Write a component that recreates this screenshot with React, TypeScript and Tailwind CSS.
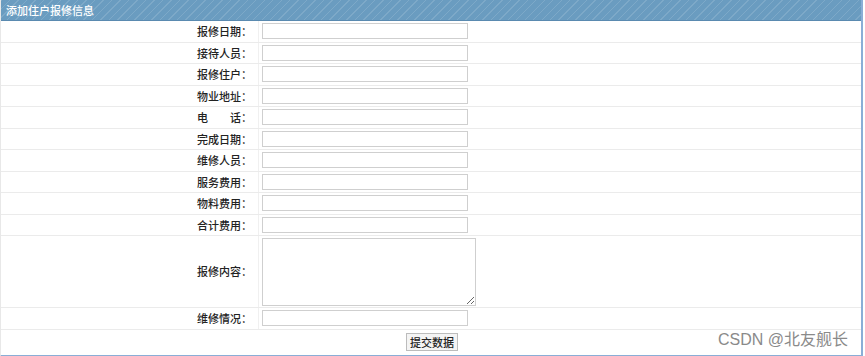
import React from 'react';

const fields = [
  '报修日期：',
  '接待人员：',
  '报修住户：',
  '物业地址：',
  '电　　话：',
  '完成日期：',
  '维修人员：',
  '服务费用：',
  '物料费用：',
  '合计费用：',
];

const Row = ({ label, children, h }: { label: string; children: React.ReactNode; h: string }) => (
  <div className={`flex border-b border-[#ebebeb] ${h}`}>
    <div className="w-[258px] shrink-0 flex items-center justify-end pr-[6px] border-r border-[#f0f0f0] text-[11px] font-medium text-[#222]">
      {label}
    </div>
    <div className="flex-1 flex items-center pl-[3px]">{children}</div>
  </div>
);

export default function App() {
  return (
    <div className="w-[865px] h-[356px] bg-white font-['Noto_Sans_CJK_SC','Noto_Sans',sans-serif]">
      <div className="relative w-[863px] border-l border-l-[#e8e8e8] border-r-2 border-r-[#8aaed6] border-b-2 border-b-[#8aaed6]">
        {/* Header */}
        <div className="h-[21px] flex items-center pl-[5px] text-[11px] font-medium text-white bg-[#6a9cc0] bg-[repeating-linear-gradient(135deg,rgba(255,255,255,0.13)_0px,rgba(255,255,255,0.13)_1px,transparent_1px,transparent_6px)] border-b border-[#5a8ab0]">
          添加住户报修信息
        </div>

        {fields.map((f) => (
          <Row key={f} label={f} h="h-[21.5px]">
            <input className="w-[206px] h-[16px] border border-[#cfcfcf] bg-white outline-none" />
          </Row>
        ))}

        <Row label="报修内容：" h="h-[72px]">
          <textarea className="w-[214px] h-[68px] border border-[#cfcfcf] bg-white outline-none resize" />
        </Row>

        <Row label="维修情况：" h="h-[21.5px]">
          <input className="w-[206px] h-[16px] border border-[#cfcfcf] bg-white outline-none" />
        </Row>

        <div className="h-[25px] flex items-center justify-center">
          <button className="w-[52px] h-[18px] border border-[#bcbcbc] bg-[#f4f4f4] text-[11px] font-medium text-[#222] flex items-center justify-center ml-[2px]">
            提交数据
          </button>
        </div>

        <div className="absolute right-[13px] bottom-[7px] text-[16px] leading-none text-[#8a8a8a] font-['Liberation_Sans','Noto_Sans_CJK_SC',sans-serif]">
          CSDN @北友舰长
        </div>
      </div>
    </div>
  );
}
